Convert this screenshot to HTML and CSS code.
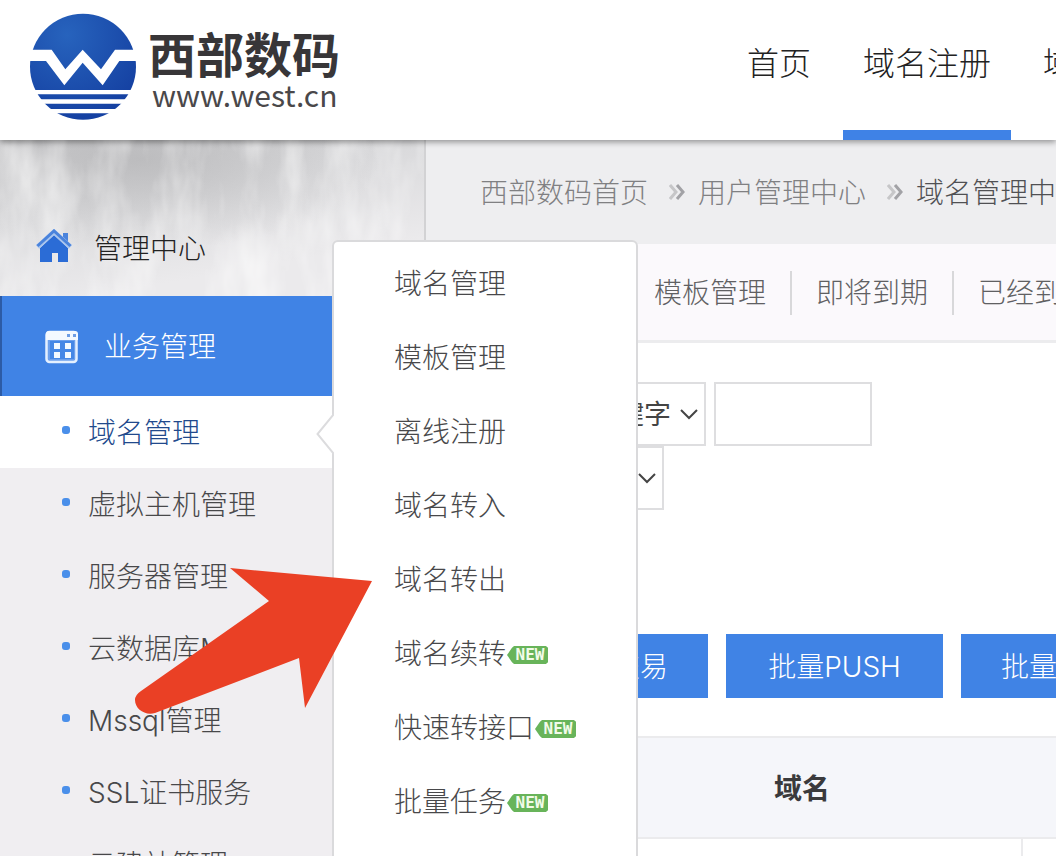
FILE: index.html
```html
<!DOCTYPE html>
<html lang="zh-CN">
<head>
<meta charset="utf-8">
<title>西部数码 - 域名管理中心</title>
<link rel="stylesheet" href="styles.css">
</head>
<body>
<header class="header">
  <a class="logo" href="#">
    <svg class="logo-mark" viewBox="84 36 330 330" aria-hidden="true">
      <defs>
        <radialGradient id="globe" cx="0.35" cy="0.2" r="0.8">
          <stop offset="0" stop-color="#2763bd"/>
          <stop offset="1" stop-color="#1541a2"/>
        </radialGradient>
      </defs>
      <circle cx="249" cy="200" r="159" fill="url(#globe)"/>
      <g fill="#fff">
        <path d="M84 149H155L196 208L248 149L303 208L345 149H414V183H358L308 256L248 188L193 256L138 183H84Z"/>
        <path d="M84 270H414V283H84ZM84 298H414V311H84ZM84 327H414V340H84Z"/>
      </g>
    </svg>
    <span class="logo-text">
      <span class="logo-name">西部数码</span>
      <span class="logo-url">www.west.cn</span>
    </span>
  </a>
  <nav class="topnav">
    <a href="#">首页</a>
    <a class="current" href="#">域名注册</a>
    <a href="#">域名交易</a>
  </nav>
</header>

<div class="layout">
  <aside class="sidebar">
    <svg class="texture" aria-hidden="true">
      <filter id="brush" x="0" y="0" width="100%" height="100%">
        <feTurbulence type="fractalNoise" baseFrequency="0.03 0.01" numOctaves="4" seed="8"/>
        <feColorMatrix values="0 0 0 0 1  0 0 0 0 1  0 0 0 0 1  1.2 0 0 0 -0.45"/>
      </filter>
      <rect width="100%" height="100%" filter="url(#brush)"/>
    </svg>
    <a class="side-home" href="#">
      <svg class="home-icon" viewBox="0 0 36 34" aria-hidden="true">
        <path d="M27 4h5v10l-5-5z" fill="#4a83dc"/>
        <path d="M4 19 18 6l14 13v14H22v-9h-6v9H4z" fill="#2b6cd6"/>
        <path d="M1.500 18 18 3l16.500 15" fill="none" stroke="#a9c5ee" stroke-width="5"/>
        <path d="M1.500 17 18 2l16.500 15" fill="none" stroke="#4a83dc" stroke-width="3"/>
      </svg>
      管理中心
    </a>
    <a class="side-group" href="#">
      <svg class="app-icon" viewBox="0 0 34 34" aria-hidden="true">
        <rect x="1.500" y="2" width="30" height="30" rx="3" fill="#6da0ec" stroke="#e4f0ff" stroke-width="2.500"/>
        <path d="M1 10V4q0-3 3-3h26q3 0 3 3v6z" fill="#f3f9ff"/>
        <rect x="5" y="11" width="24" height="18" fill="#4587e6"/>
        <path d="M9 13h6v6H9zM20 13h6v6h-6zM9 22h6v6H9zM20 22h6v6h-6z" fill="#f3f9ff"/>
        <path d="M22 4h3v3h-3zM28 4h3v3h-3z" fill="#6d9de4"/>
      </svg>
      业务管理
    </a>
    <ul class="submenu">
      <li class="active"><a href="#">域名管理</a>
        <div class="popover">
          <svg class="pointer" viewBox="0 0 18 42" aria-hidden="true">
            <path d="M18 1 1.500 21 18 41" fill="#fff" stroke="#dcdcde" stroke-width="2"/>
          </svg>
          <a href="#">域名管理</a>
          <a href="#">模板管理</a>
          <a href="#">离线注册</a>
          <a href="#">域名转入</a>
          <a href="#">域名转出</a>
          <a href="#">域名续转<span class="new">NEW</span></a>
          <a href="#">快速转接口<span class="new">NEW</span></a>
          <a href="#">批量任务<span class="new">NEW</span></a>
        </div>
      </li>
      <li><a href="#">虚拟主机管理</a></li>
      <li><a href="#">服务器管理</a></li>
      <li><a href="#">云数据库Mysql</a></li>
      <li><a href="#">Mssql管理</a></li>
      <li><a href="#">SSL证书服务</a></li>
      <li><a href="#">云建站管理</a></li>
    </ul>
  </aside>

  <main class="main">
    <nav class="crumbs">
      <a href="#">西部数码首页</a>
      <svg class="sep" viewBox="0 0 16 18" aria-hidden="true"><path d="M1 2l6 7-6 7" fill="none" stroke="#c6c6c8" stroke-width="3"/><path d="M8 2l6 7-6 7" fill="none" stroke="#a2a2a6" stroke-width="3"/></svg>
      <a href="#">用户管理中心</a>
      <svg class="sep" viewBox="0 0 16 18" aria-hidden="true"><path d="M1 2l6 7-6 7" fill="none" stroke="#c6c6c8" stroke-width="3"/><path d="M8 2l6 7-6 7" fill="none" stroke="#a2a2a6" stroke-width="3"/></svg>
      <span>域名管理中心</span>
    </nav>
    <nav class="tabs">
      <a href="#">域名管理</a>
      <a href="#">模板管理</a>
      <a href="#">即将到期</a>
      <a href="#">已经到期</a>
    </nav>
    <form class="filters">
      <div class="filter-row">
        <span class="select key">
          <select aria-label="搜索方式"><option>域名关键字</option></select>
          <svg viewBox="0 0 18 12" aria-hidden="true"><path d="M1 2l8 8 8-8" fill="none" stroke="#444" stroke-width="2"/></svg>
        </span>
        <input class="keyword" type="text" aria-label="关键字">
      </div>
      <div class="filter-row">
        <span class="select state">
          <select aria-label="域名状态"><option>全部</option></select>
          <svg viewBox="0 0 18 12" aria-hidden="true"><path d="M1 2l8 8 8-8" fill="none" stroke="#444" stroke-width="2"/></svg>
        </span>
      </div>
    </form>
    <div class="actions">
      <button type="button">批量交易</button>
      <button class="push" type="button">批量PUSH</button>
      <button type="button">批量续费</button>
    </div>
    <table class="domains">
      <colgroup><col class="col-check"><col class="col-name"><col></colgroup>
      <thead><tr><th></th><th>域名</th><th></th></tr></thead>
      <tbody><tr><td></td><td></td><td></td></tr></tbody>
    </table>
  </main>
</div>

<svg class="callout" viewBox="0 0 240 148" aria-hidden="true">
  <path d="M97 2 239 15 172 142 166 92 22 147C12 150 2 143 2 134Q2 129 8 125L136 35Z" fill="#ea4025"/>
</svg>
</body>
</html>
```
FILE: styles.css
```css
* { box-sizing: border-box; }

body {
  margin: 0;
  height: 100vh;
  overflow: hidden;
  position: relative;
  display: flex;
  flex-direction: column;
  background: #fff;
  color: #48484a;
  font: 300 28px/40px Inter, "Noto Sans CJK SC", sans-serif;
}

a { color: inherit; text-decoration: none; }

/* Header */
.header {
  position: relative;
  z-index: 1;
  flex: none;
  display: flex;
  height: 140px;
  padding-left: 28px;
  background: #fff;
  box-shadow: 0 2px 6px rgba(0, 0, 0, 0.4);
  white-space: nowrap;
}

.logo {
  flex: none;
  display: flex;
  align-items: flex-start;
  gap: 10px;
  width: 699px;
  padding-top: 12px;
  color: #383638;
}

.logo-mark { width: 110px; height: 110px; }

.logo-text { display: flex; flex-direction: column; padding-top: 14px; }

.logo-name {
  font: 700 48px/52px "Noto Sans CJK SC", sans-serif;
}

.logo-url {
  padding-left: 4px;
  font: 400 30px/32px "Noto Sans CJK SC", sans-serif;
  color: #4a484a;
}

.topnav { display: flex; gap: 12px; }

.topnav a {
  padding: 0 20px;
  font-size: 32px;
  line-height: 128px;
  color: #222;
}

.topnav .current { border-bottom: 10px solid #3f82e6; }

/* Layout */
.layout { flex: 1; display: flex; min-height: 0; }

.sidebar {
  position: relative;
  flex: none;
  width: 426px;
  border-right: 2px solid #d2d2d4;
  background:
    radial-gradient(ellipse 240px 90px at 140px 20px, rgba(165, 165, 167, 0.5), transparent),
    linear-gradient(170deg, #cdcdcf 0, #dadadc 80px, #ebeaec 170px);
}

.texture {
  position: absolute;
  top: 0;
  left: 0;
  width: 100%;
  height: 156px;
}

.side-home, .side-group, .submenu { position: relative; }

.side-home {
  display: flex;
  align-items: center;
  gap: 22px;
  height: 156px;
  padding: 62px 0 0 36px;
  color: #222;
}

.home-icon { width: 36px; height: 34px; margin-bottom: 6px; }

.side-group {
  display: flex;
  align-items: center;
  gap: 25px;
  height: 100px;
  padding: 2px 0 0 43px;
  border-left: 2px solid #2c5ba6;
  background: #4083e5;
  color: #fff;
}

.app-icon { width: 34px; height: 34px; }

.submenu { margin: 0; padding: 0; list-style: none; }

.submenu li {
  position: relative;
  display: flex;
  align-items: center;
  height: 72px;
  padding: 2px 0 0 62px;
  background: #f0eef1;
}

.submenu li::before {
  content: "";
  width: 8px;
  height: 8px;
  margin: 0 18px 6px 0;
  border-radius: 3px;
  background: #4a8fea;
}

.submenu .active { background: #fff; }
.submenu .active > a { color: #21498c; }

/* Flyout menu */
.popover {
  position: absolute;
  z-index: 2;
  top: -156px;
  left: 332px;
  width: 306px;
  height: 700px;
  padding: 5px 0 0 60px;
  border: 2px solid #dadadc;
  border-radius: 6px;
  background: #fff;
}

.popover a {
  display: flex;
  align-items: center;
  height: 74px;
  white-space: nowrap;
}

.pointer {
  position: absolute;
  top: 171px;
  left: -18px;
  width: 18px;
  height: 42px;
}

.new {
  display: flex;
  align-items: center;
  justify-content: center;
  width: 41px;
  height: 18px;
  margin: 2px 0 0 1px;
  padding-left: 5px;
  clip-path: polygon(0 50%, 5px 10%, 7px 0, 95% 0, 100% 10%, 100% 90%, 95% 100%, 7px 100%, 5px 90%);
  background: #68b45a;
  color: #f2fbe9;
  font: 700 16px/18px "DejaVu Sans Mono", monospace;
}

/* Main column */
.main { flex: 1; min-width: 0; white-space: nowrap; }

.crumbs {
  display: flex;
  align-items: center;
  height: 104px;
  padding: 2px 0 0 54px;
  background: #eeeef0;
  color: #808082;
}

.crumbs span { color: #505053; }

.sep { flex: none; width: 16px; height: 18px; margin: 0 13px 2px 21px; }

.tabs {
  display: flex;
  align-items: center;
  height: 99px;
  padding: 2px 0 0 42px;
  border-bottom: 3px solid #ececee;
  background: #fbf9fc;
  color: #606062;
}

.tabs a { padding: 0 24px; line-height: 44px; }
.tabs a + a { border-left: 2px solid #d8d8da; }

.filters { padding: 39px 0 0 42px; }

.filter-row { display: flex; gap: 8px; }

.select { position: relative; height: 64px; }

.select select {
  width: 100%;
  height: 100%;
  padding: 2px 33px 0 20px;
  border: 2px solid #dedee0;
  border-radius: 0;
  appearance: none;
  background: #fff;
  color: #444;
  font: inherit;
  font-weight: 400;
  font-size: 27px;
  text-align-last: right;
}

.select svg {
  position: absolute;
  right: 8px;
  top: 26px;
  width: 18px;
  height: 12px;
  pointer-events: none;
}

.key { width: 238px; }
.state { width: 196px; }

.keyword {
  width: 158px;
  height: 64px;
  padding: 0 12px;
  border: 2px solid #dedee0;
  background: #fff;
  font: inherit;
}

.actions { display: flex; gap: 18px; padding: 124px 0 38px 90px; }

.actions button {
  flex: none;
  height: 64px;
  padding: 2px 40px 0;
  border: 0;
  background: #4083e5;
  color: #fff;
  font: inherit;
}

.actions .push { min-width: 217px; }

.domains {
  width: 100%;
  table-layout: fixed;
  border-collapse: collapse;
}

.col-check { width: 156px; }
.col-name { width: 440px; }

.domains th {
  height: 101px;
  padding: 2px 0 0;
  border: solid #ebebed;
  border-width: 2px 0;
  background: #f5f6fa;
  color: #3a3a3c;
  font-weight: 700;
}

.domains td { height: 80px; }
.domains td + td { border-left: 2px solid #ebebed; }
.domains td:nth-child(2) { border-left: 0; }

/* Pointer arrow drawn over the page */
.callout {
  position: absolute;
  z-index: 3;
  top: 566px;
  left: 133px;
  width: 240px;
  height: 148px;
}
```
